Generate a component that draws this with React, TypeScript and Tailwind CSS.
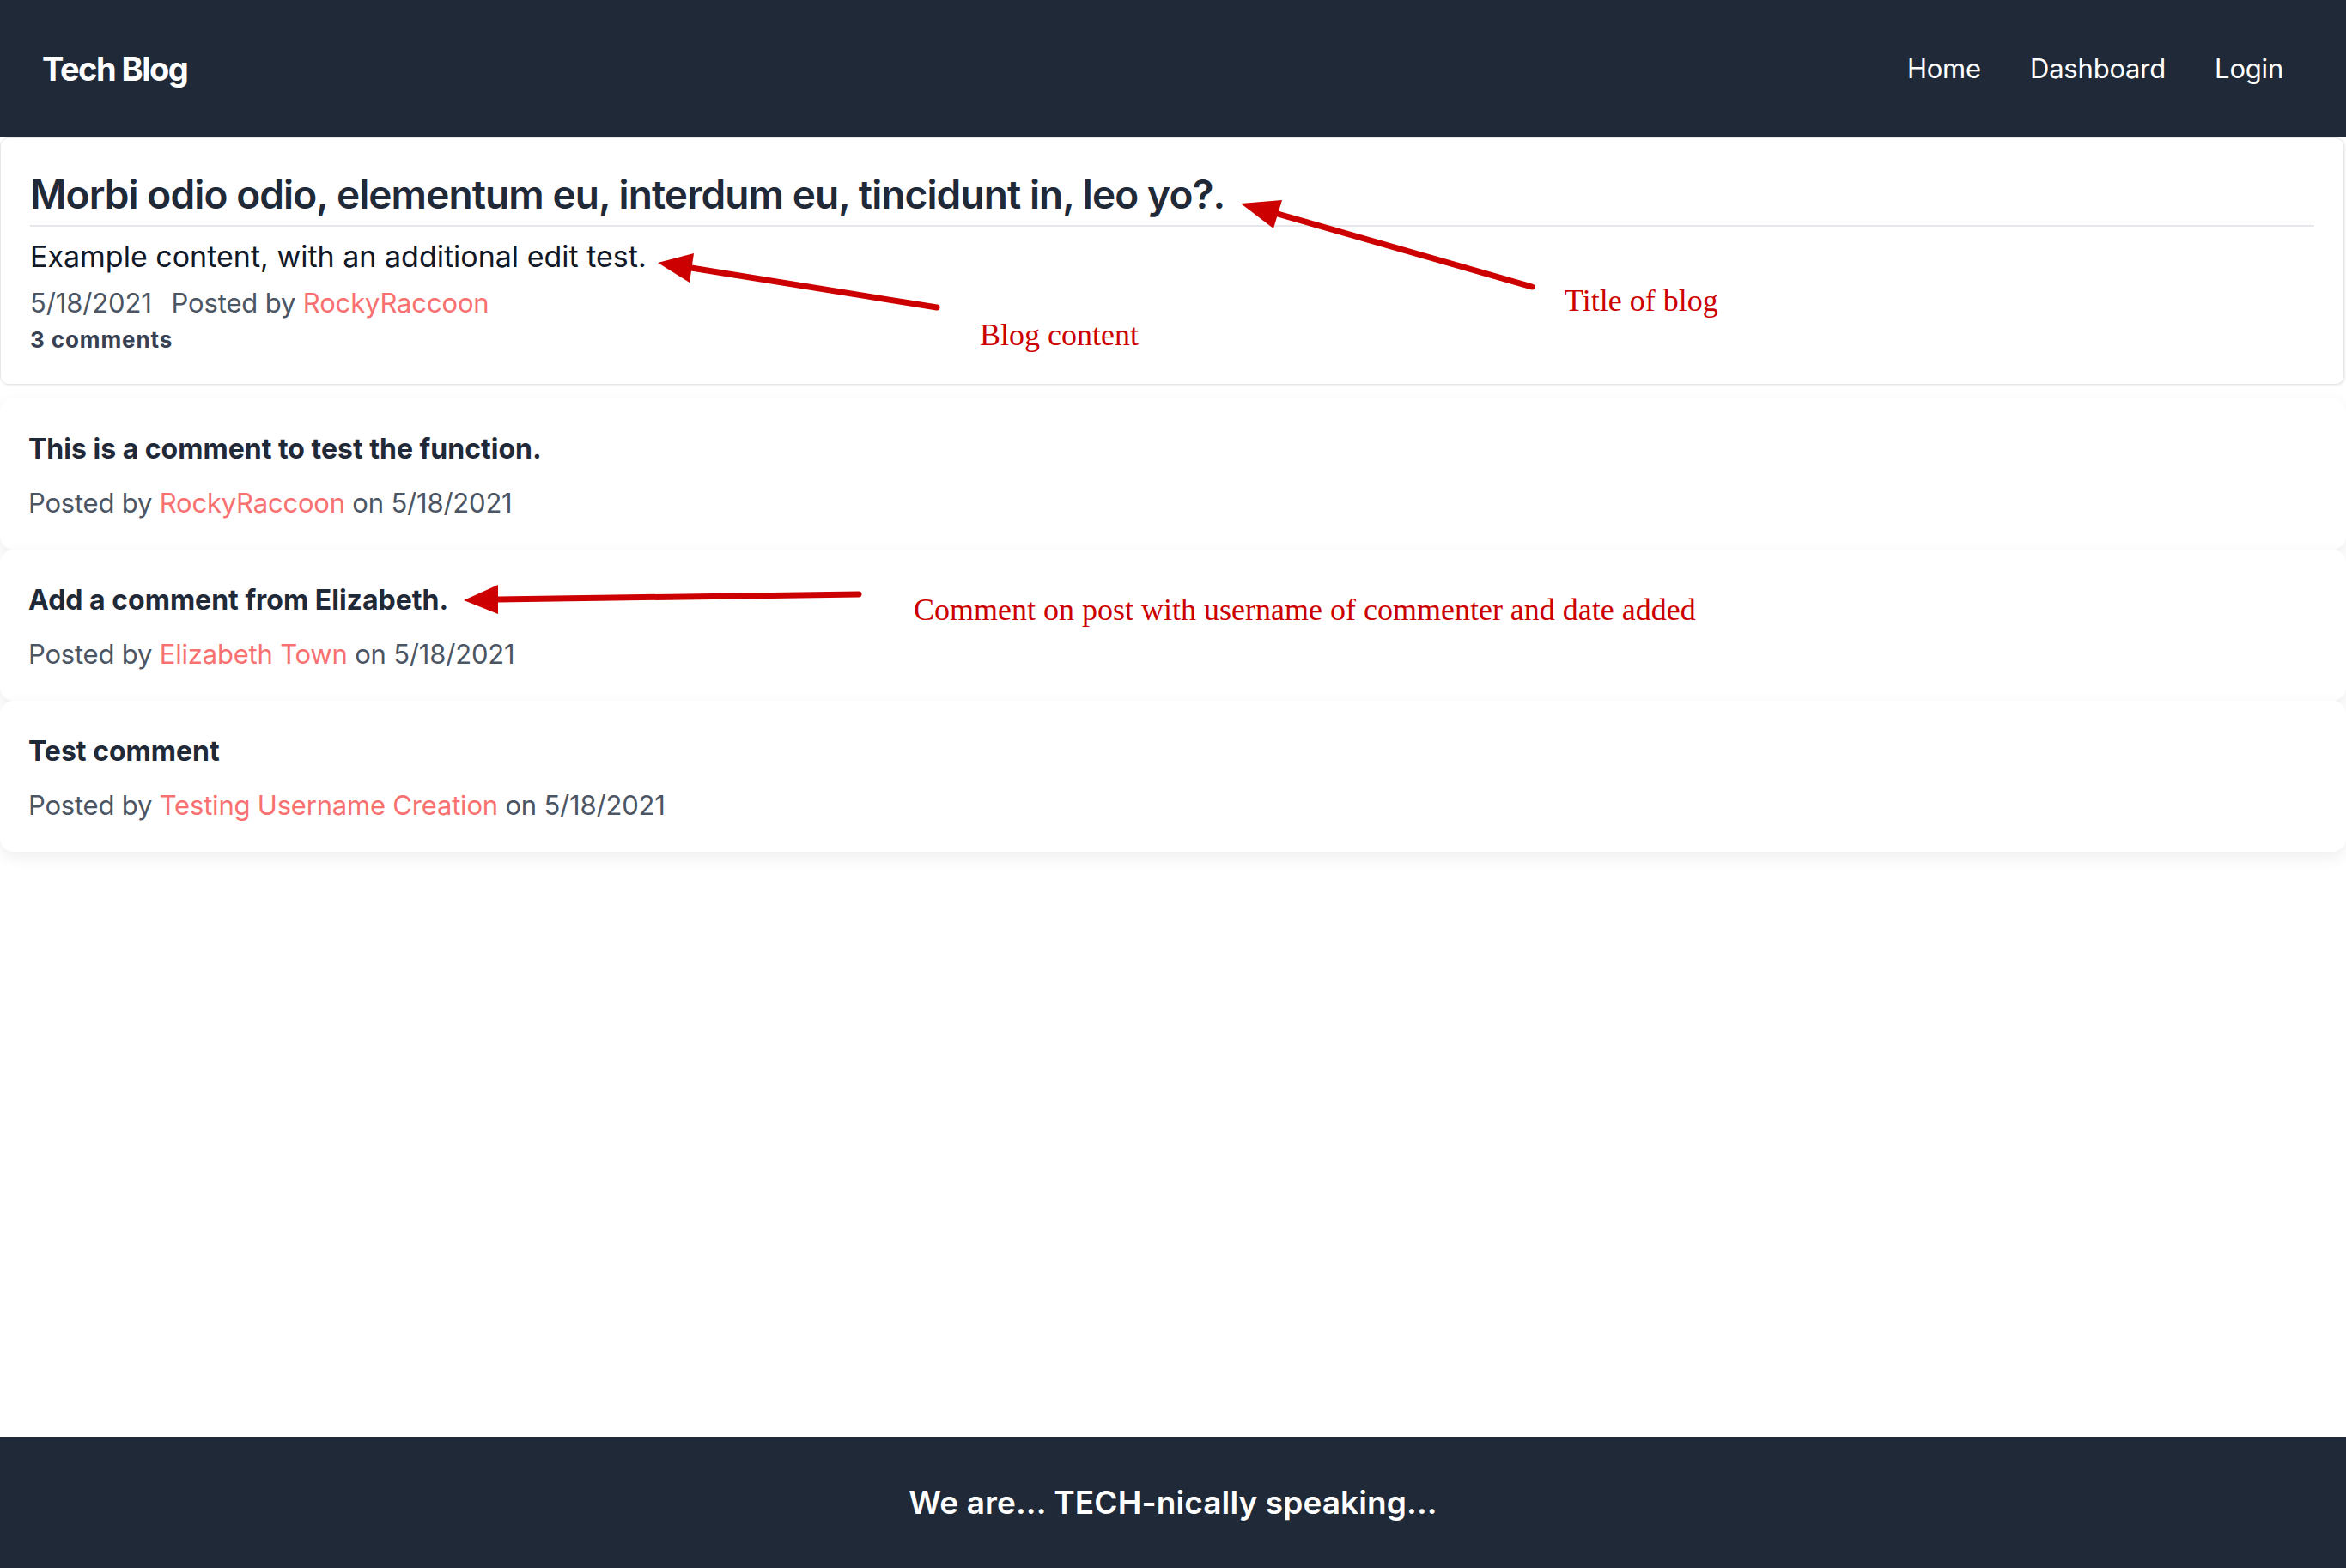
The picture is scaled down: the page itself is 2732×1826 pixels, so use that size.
const comments = [
  { text: 'This is a comment to test the function.', user: 'RockyRaccoon', date: '5/18/2021' },
  { text: 'Add a comment from Elizabeth.', user: 'Elizabeth Town', date: '5/18/2021' },
  { text: 'Test comment', user: 'Testing Username Creation', date: '5/18/2021' },
]

// red call-outs drawn on top of the page
function Arrow({ tail, base, tip, wing1, wing2 }: { tail: number[]; base: number[]; tip: number[]; wing1: number[]; wing2: number[] }) {
  return (
    <g>
      <line x1={tail[0]} y1={tail[1]} x2={base[0]} y2={base[1]} stroke="#cc0000" strokeWidth={7} strokeLinecap="round" />
      <polygon points={`${tip[0]},${tip[1]} ${wing1[0]},${wing1[1]} ${wing2[0]},${wing2[1]}`} fill="#cc0000" />
    </g>
  )
}

export default function App() {
  return (
    <div className="relative flex min-h-screen flex-col bg-white font-['Inter',sans-serif] text-[#1f2937]">
      <header className="flex h-[160px] items-center justify-between bg-[#1f2937] pl-[49px] pr-[73px] text-white">
        <h1 className="text-[38px] font-bold tracking-[-1.5px]">Tech Blog</h1>
        <nav className="flex items-center gap-[57px] text-[31px] tracking-[-0.2px]">
          <a>Home</a>
          <a>Dashboard</a>
          <a>Login</a>
        </nav>
      </header>

      <main className="flex-1">
        {/* post */}
        <article className="mr-[2px] rounded-[10px] border border-[#e5e7eb] bg-white px-[34px] pb-[35px] pt-[37px] shadow-[1px_1px_3px_rgba(0,0,0,0.08)]">
          <h2 className="border-b-2 border-[#e5e7eb] pb-[8px] text-[46px] font-semibold leading-[56px] tracking-[-0.9px] text-[#1f2937]">
            Morbi odio odio, elementum eu, interdum eu, tincidunt in, leo yo?.
          </h2>
          <p className="mt-[13px] text-[34px] leading-[44px] text-[#111827]">
            Example content, with an additional edit test.
          </p>
          <p className="mt-[12px] text-[31px] leading-[40px] tracking-[-0.15px] text-[#4b5563]">
            5/18/2021<span className="ml-[23px]">Posted by </span>
            <span className="text-[#f87171]">RockyRaccoon</span>
          </p>
          <p className="mt-[7px] text-[26px] font-bold leading-[32px] tracking-[0.9px] text-[#374151]">3 comments</p>
        </article>

        {/* comments */}
        <div className="mt-[16px] flex flex-col">
          {comments.map((c) => (
            <div
              key={c.text}
              className="h-[176px] rounded-2xl bg-white px-[33px] pt-[39px] shadow-[0_6px_18px_rgba(0,0,0,0.07)]"
            >
              <p className="text-[32px] font-bold leading-[40px] text-[#1f2937]">{c.text}</p>
              <p className="mt-[23px] text-[31px] leading-[40px] tracking-[-0.2px] text-[#4b5563]">
                Posted by <span className="text-[#f87171]">{c.user}</span> on {c.date}
              </p>
            </div>
          ))}
        </div>
      </main>

      <footer className="flex h-[152px] items-center justify-center bg-[#1f2937] text-[37px] font-semibold tracking-[0.1px] text-white">
        We are... TECH-nically speaking...
      </footer>

      {/* annotations */}
      <svg className="pointer-events-none absolute left-0 top-0" width={2732} height={1826}>
        <Arrow tail={[1784, 334]} base={[1488, 249]} tip={[1445, 237]} wing1={[1493, 233]} wing2={[1483, 266]} />
        <Arrow tail={[1091, 358]} base={[805, 312]} tip={[766, 306]} wing1={[808, 295]} wing2={[803, 329]} />
        <Arrow tail={[1000, 692]} base={[580, 698]} tip={[540, 699]} wing1={[580, 715]} wing2={[580, 681]} />
      </svg>
      <span className="absolute left-[1822px] top-[332px] whitespace-nowrap font-['Liberation_Serif',serif] text-[36px] leading-[36px] text-[#cc0000]">
        Title of blog
      </span>
      <span className="absolute left-[1141px] top-[372px] whitespace-nowrap font-['Liberation_Serif',serif] text-[36px] leading-[36px] text-[#cc0000]">
        Blog content
      </span>
      <span className="absolute left-[1064px] top-[692px] whitespace-nowrap font-['Liberation_Serif',serif] text-[36px] leading-[36px] text-[#cc0000]">
        Comment on post with username of commenter and date added
      </span>
    </div>
  )
}
